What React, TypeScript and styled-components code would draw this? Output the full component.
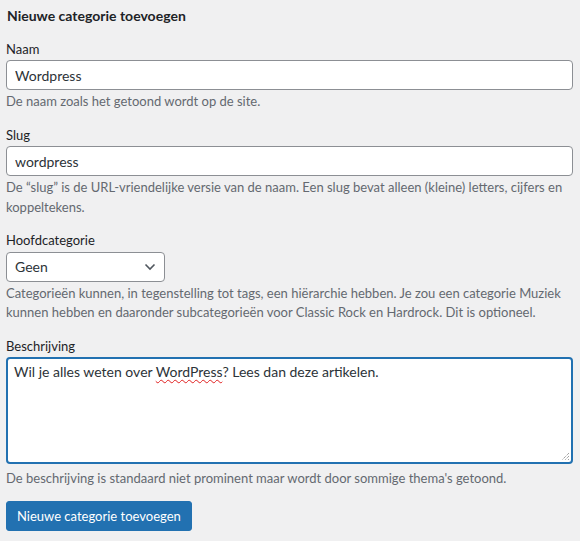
import React from "react";
import styled, { createGlobalStyle } from "styled-components";

const FONT = `"Lato", "Noto Sans", "Liberation Sans", sans-serif`;

const GlobalStyle = createGlobalStyle`
  html, body {
    margin: 0;
    padding: 0;
    background: #f0f0f1;
  }
  body {
    font-family: ${FONT};
    color: #1d2327;
  }
  * { box-sizing: border-box; }
`;

const Page = styled.form`
  padding: 6px 7px 0 6px;
  width: 580px;
`;

const Heading = styled.h2`
  margin: 0 0 13.5px 1px;
  font-size: 14px;
  line-height: 20px;
  font-weight: 700;
  color: #1d2327;
`;

const Field = styled.div`
  display: flex;
  flex-direction: column;
  margin-bottom: 14px;
`;

const Label = styled.label`
  font-size: 13px;
  line-height: 19.5px;
  color: #1d2327;
  margin-bottom: 1px;
`;

const TextInput = styled.input`
  width: 100%;
  height: 30px;
  padding: 0 8px;
  border: 1px solid #8c8f94;
  border-radius: 4px;
  background: #fff;
  font-family: ${FONT};
  font-size: 14px;
  color: #2c3338;
  outline: none;
`;

const Description = styled.p<{ $gap?: number }>`
  margin: ${(p) => p.$gap ?? 2}px 0 0;
  font-size: 13px;
  line-height: 19.5px;
  color: #646970;
`;

const SelectBox = styled.div`
  position: relative;
  width: 159px;
  height: 30px;
  display: flex;
  align-items: center;
  padding: 0 24px 0 8px;
  border: 1px solid #8c8f94;
  border-radius: 4px;
  background: #fff;
  font-size: 14px;
  color: #2c3338;
`;

const Chevron = styled.svg`
  position: absolute;
  right: 8px;
  top: 50%;
  transform: translateY(-50%);
`;

const TextArea = styled.div`
  position: relative;
  width: 100%;
  height: 107px;
  padding: 3px 6px;
  border: 2px solid #2271b1;
  border-radius: 4px;
  background: #fff;
  font-size: 14px;
  line-height: 20px;
  color: #2c3338;
`;

const Misspelled = styled.span`
  text-decoration: underline wavy #e02020;
  text-decoration-thickness: 1px;
  text-underline-offset: 2px;
`;

const Grip = styled.svg`
  position: absolute;
  right: 1px;
  bottom: 1px;
`;

const Button = styled.button`
  margin-top: -2px;
  height: 30px;
  padding: 0 10px;
  border: 1px solid #2271b1;
  border-radius: 3px;
  background: #2271b1;
  color: #fff;
  font-family: ${FONT};
  font-size: 13px;
  cursor: pointer;
`;

export default function App() {
  return (
    <>
      <GlobalStyle />
      <Page onSubmit={(e) => e.preventDefault()}>
        <Heading>Nieuwe categorie toevoegen</Heading>

        <Field>
          <Label htmlFor="tag-name">Naam</Label>
          <TextInput id="tag-name" defaultValue="Wordpress" />
          <Description>De naam zoals het getoond wordt op de site.</Description>
        </Field>

        <Field>
          <Label htmlFor="tag-slug">Slug</Label>
          <TextInput id="tag-slug" defaultValue="wordpress" />
          <Description>
            De “slug” is de URL-vriendelijke versie van de naam. Een slug bevat alleen (kleine) letters, cijfers en
            koppeltekens.
          </Description>
        </Field>

        <Field>
          <Label>Hoofdcategorie</Label>
          <SelectBox>
            Geen
            <Chevron width="12" height="8" viewBox="0 0 12 8">
              <path d="M1.5 1.5 L6 6 L10.5 1.5" fill="none" stroke="#50575e" strokeWidth="1.6" />
            </Chevron>
          </SelectBox>
          <Description>
            Categorieën kunnen, in tegenstelling tot tags, een hiërarchie hebben. Je zou een categorie Muziek kunnen
            hebben en daaronder subcategorieën voor Classic Rock en Hardrock. Dit is optioneel.
          </Description>
        </Field>

        <Field>
          <Label>Beschrijving</Label>
          <TextArea role="textbox" aria-multiline="true">
            Wil je alles weten over <Misspelled>WordPress</Misspelled>? Lees dan deze artikelen.
            <Grip width="9" height="9" viewBox="0 0 9 9">
              <path d="M8 1 L1 8 M8 4 L4 8 M8 7 L7 8" stroke="#7a7a7a" strokeWidth="1" strokeDasharray="1 1" />
            </Grip>
          </TextArea>
          <Description $gap={5}>
            De beschrijving is standaard niet prominent maar wordt door sommige thema's getoond.
          </Description>
        </Field>

        <Button type="submit">Nieuwe categorie toevoegen</Button>
      </Page>
    </>
  );
}
